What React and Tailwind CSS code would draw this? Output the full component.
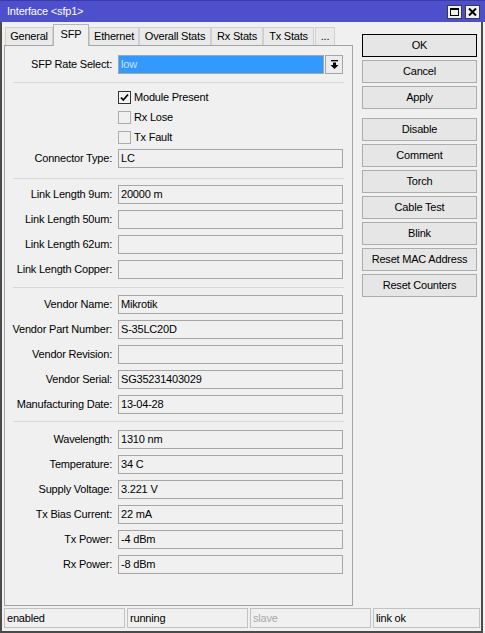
import React from 'react';

const tabs = [
  { name: 'General', w: 'w-[48px]' },
  { name: 'SFP', w: 'w-[36px]', active: true },
  { name: 'Ethernet', w: 'w-[50px]' },
  { name: 'Overall Stats', w: 'w-[72px]' },
  { name: 'Rx Stats', w: 'w-[52px]' },
  { name: 'Tx Stats', w: 'w-[51px]' },
  { name: '...', w: 'w-[20px] ml-[1px]' },
];

const linkRows = [
  ['Link Length 9um:', '20000 m'],
  ['Link Length 50um:', ''],
  ['Link Length 62um:', ''],
  ['Link Length Copper:', ''],
];

const vendorRows = [
  ['Vendor Name:', 'Mikrotik'],
  ['Vendor Part Number:', 'S-35LC20D'],
  ['Vendor Revision:', ''],
  ['Vendor Serial:', 'SG35231403029'],
  ['Manufacturing Date:', '13-04-28'],
];

const monitorRows = [
  ['Wavelength:', '1310 nm'],
  ['Temperature:', '34 C'],
  ['Supply Voltage:', '3.221 V'],
  ['Tx Bias Current:', '22 mA'],
  ['Tx Power:', '-4 dBm'],
  ['Rx Power:', '-8 dBm'],
];

const buttons = [
  ['OK', 'Cancel', 'Apply'],
  ['Disable', 'Comment', 'Torch', 'Cable Test', 'Blink', 'Reset MAC Address', 'Reset Counters'],
];

const Field = ({ label, value }) => (
  <div className="flex items-center h-[19px]">
    <div className="w-[107px] text-right whitespace-nowrap">{label}</div>
    <div className="ml-[6px] w-[225px] h-[19px] border border-[#a6a6a6] bg-[#f0f0f0] pl-[2px] flex items-center">
      {value}
    </div>
  </div>
);

const Separator = ({ mt }) => <div className={`${mt} ml-[8px] w-[331px] h-px bg-[#d7d7d7]`}></div>;

const Check = ({ label, checked }) => (
  <div className="flex items-center h-[13px] ml-[113px]">
    <div
      className={`w-[13px] h-[13px] border flex items-center justify-center ${
        checked ? 'border-[#333333] bg-[#f4f4f4]' : 'border-[#adadad] bg-[#f0f0f0]'
      }`}
    >
      {checked && (
        <svg width="11" height="11" viewBox="0 0 11 11">
          <polyline points="2,5.5 4.3,8 9,2.5" fill="none" stroke="#000" strokeWidth="1.7" />
        </svg>
      )}
    </div>
    <span className="ml-[3px]">{label}</span>
  </div>
);

const Button = ({ label, primary }) => (
  <div
    className={`w-[115px] h-[23px] flex items-center justify-center bg-[#e6e6e6] border ${
      primary ? 'border-black' : 'border-[#adadad]'
    }`}
  >
    {label}
  </div>
);

export default function App() {
  return (
    <div className="w-[485px] h-[633px] bg-[#f0f0f0] flex flex-col text-[11px] tracking-[-0.2px] text-black font-['Liberation_Sans',Arial,sans-serif] overflow-hidden">
      {/* Title bar */}
      <div className="h-[22px] bg-[#4e4fcd] border-t border-[#3a3ba8] flex items-center justify-between pl-[7px] pr-[5px]">
        <span className="text-white">Interface &lt;sfp1&gt;</span>
        <div className="flex gap-[3px]">
          <div className="w-[15px] h-[14px] bg-[#f0f0f0] border border-[#3c3c3c] flex items-center justify-center">
            <div className="w-[9px] h-[8px] border border-black border-t-2"></div>
          </div>
          <div className="w-[15px] h-[14px] bg-[#f0f0f0] border border-[#3c3c3c] flex items-center justify-center">
            <svg width="9" height="8" viewBox="0 0 9 8">
              <path d="M1 0.5 L8 7.5 M8 0.5 L1 7.5" stroke="#000" strokeWidth="2" />
            </svg>
          </div>
        </div>
      </div>

      {/* Window body */}
      <div className="w-[483px] flex-1 border-l-2 border-r-2 border-b-2 border-[#4a4a4a] flex flex-col">
        <div className="flex">
          {/* Tabs + panel */}
          <div className="pl-[2px] pt-[2px]">
            <div className="h-[21px] flex items-end pl-px">
              {tabs.map((t) =>
                t.active ? (
                  <div
                    key={t.name}
                    className={`${t.w} h-[22px] -mb-px relative z-10 bg-[#f0f0f0] border-t border-x border-[#b5b5b5] flex items-center justify-center pb-[2px]`}
                  >
                    {t.name}
                  </div>
                ) : (
                  <div
                    key={t.name}
                    className={`${t.w} h-[18px] bg-[#eaeaea] border-t border-x border-[#d0d0d0] flex items-center justify-center`}
                  >
                    {t.name}
                  </div>
                )
              )}
            </div>
            <div className="w-[349px] h-[561px] border border-[#a3a3a3] flex flex-col pt-[9px]">
              {/* SFP Rate Select */}
              <div className="flex items-center h-[19px]">
                <div className="w-[107px] text-right">SFP Rate Select:</div>
                <div className="ml-[6px] w-[206px] h-[19px] border border-[#a6a6a6] bg-[#3399ff] text-[#c9e2ff] pl-[2px] flex items-center">
                  low
                </div>
                <div className="ml-px w-[18px] h-[19px] border border-[#a6a6a6] bg-[#ececec] flex items-center justify-center">
                  <svg width="9" height="10" viewBox="0 0 9 10">
                    <rect x="1" y="0" width="7" height="1.3" fill="#000" />
                    <path d="M3 2.5 H6 V5 H8.5 L4.5 9 L0.5 5 H3 Z" fill="#000" />
                  </svg>
                </div>
              </div>

              <Separator mt="mt-[8px]" />

              <div className="mt-[8px] flex flex-col gap-[7px]">
                <Check label="Module Present" checked />
                <Check label="Rx Lose" />
                <Check label="Tx Fault" />
              </div>

              <div className="mt-[5px]">
                <Field label="Connector Type:" value="LC" />
              </div>

              <Separator mt="mt-[10px]" />

              <div className="mt-[6px] flex flex-col gap-[6px]">
                {linkRows.map(([l, v]) => (
                  <Field key={l} label={l} value={v} />
                ))}
              </div>

              <Separator mt="mt-[8px]" />

              <div className="mt-[7px] flex flex-col gap-[6px]">
                {vendorRows.map(([l, v]) => (
                  <Field key={l} label={l} value={v} />
                ))}
              </div>

              <Separator mt="mt-[7px]" />

              <div className="mt-[8px] flex flex-col gap-[6px]">
                {monitorRows.map(([l, v]) => (
                  <Field key={l} label={l} value={v} />
                ))}
              </div>
            </div>
          </div>

          {/* Right buttons */}
          <div className="ml-[9px] mt-[12px] flex flex-col">
            <div className="flex flex-col gap-[3px]">
              {buttons[0].map((b) => (
                <Button key={b} label={b} primary={b === 'OK'} />
              ))}
            </div>
            <div className="mt-[9px] flex flex-col gap-[3px]">
              {buttons[1].map((b) => (
                <Button key={b} label={b} />
              ))}
            </div>
          </div>
        </div>

        {/* Status bar */}
        <div className="mt-[2px] pl-[2px] flex gap-[2px] h-[20px]">
          <div className="w-[121px] border border-[#c2c2c2] pl-[2px] flex items-center">enabled</div>
          <div className="w-[121px] border border-[#c2c2c2] pl-[2px] flex items-center">running</div>
          <div className="w-[121px] border border-[#c2c2c2] pl-[2px] flex items-center text-[#a8a8a8]">slave</div>
          <div className="w-[107px] border border-[#c2c2c2] pl-[2px] flex items-center">link ok</div>
        </div>
      </div>
    </div>
  );
}
